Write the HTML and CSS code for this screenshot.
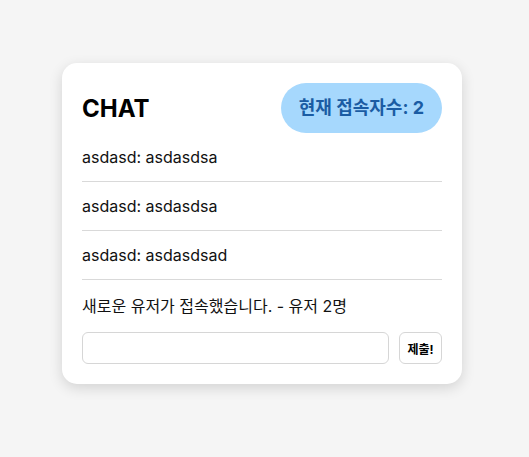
FILE: index.html
```html
<!DOCTYPE html>
<html lang="ko">
<head>
<meta charset="utf-8">
<title>Chat</title>
<link rel="stylesheet" href="styles.css">
</head>
<body>
<main class="page">
  <section class="card">
    <header class="card-header">
      <h1 class="title">CHAT</h1>
      <span class="badge">현재 접속자수: 2</span>
    </header>
    <ul class="messages">
      <li class="message">asdasd: asdasdsa</li>
      <li class="message">asdasd: asdasdsa</li>
      <li class="message">asdasd: asdasdsad</li>
    </ul>
    <p class="notice">새로운 유저가 접속했습니다. - 유저 2명</p>
    <form class="composer">
      <input class="input" type="text">
      <button class="submit" type="button">제출!</button>
    </form>
  </section>
</main>
</body>
</html>
```
FILE: styles.css
```css
* { box-sizing: border-box; }
html, body { margin: 0; padding: 0; }
body {
  background: #f5f5f5;
  font-family: Inter, "Noto Sans CJK KR", sans-serif;
  color: #111;
  width: 529px;
  height: 457px;
}
.page {
  padding: 63px 0 0 62px;
}
.card {
  width: 400px;
  background: #fff;
  border-radius: 15px;
  box-shadow: 0 4px 14px rgba(0, 0, 0, 0.14);
  padding: 20px;
}
.card-header {
  display: flex;
  justify-content: space-between;
  align-items: center;
}
.title {
  margin: 0;
  font-size: 24px;
  font-weight: 700;
  color: #000;
}
.badge {
  background: #a6d8fd;
  color: #1b5ca3;
  font-weight: 700;
  font-size: 18px;
  line-height: 26px;
  padding: 12px 18px;
  border-radius: 25px;
}
.messages {
  list-style: none;
  margin: 0;
  padding: 0;
}
.message {
  font-size: 16px;
  line-height: 24px;
  padding: 12px 0;
  border-bottom: 1px solid #d9d9d9;
}
.notice {
  margin: 0;
  font-size: 16px;
  line-height: 24px;
  padding: 14px 0 0;
}
.composer {
  display: flex;
  gap: 10px;
  margin-top: 14px;
}
.input {
  flex: 1;
  height: 32px;
  border: 1px solid #d6d6d6;
  border-radius: 6px;
  font: inherit;
  padding: 0 8px;
}
.submit {
  width: 43px;
  height: 32px;
  border: 1px solid #d6d6d6;
  border-radius: 6px;
  background: #fff;
  font-family: Inter, "Noto Sans CJK KR", sans-serif;
  font-weight: 700;
  font-size: 12px;
  color: #000;
  padding: 0;
}
```
